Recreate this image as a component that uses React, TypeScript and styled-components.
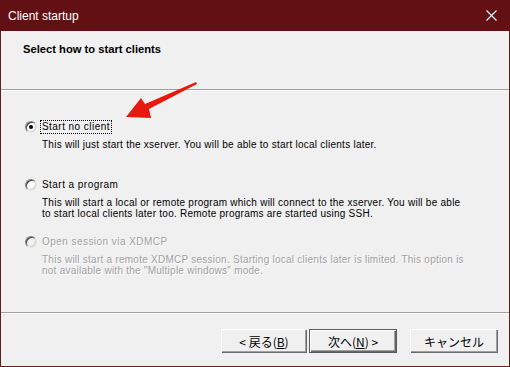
import styled, { createGlobalStyle } from 'styled-components';

const GlobalStyle = createGlobalStyle`
  html, body {
    margin: 0;
    padding: 0;
    background: #f0f0f0;
  }
  * { box-sizing: border-box; }
`;

const options = [
  {
    label: 'Start no client',
    lines: ['This will just start the xserver. You will be able to start local clients later.'],
    checked: true,
    disabled: false,
    focused: true,
  },
  {
    label: 'Start a program',
    lines: [
      'This will start a local or remote program which will connect to the xserver. You will be able',
      'to start local clients later too. Remote programs are started using SSH.',
    ],
    checked: false,
    disabled: false,
    focused: false,
  },
  {
    label: 'Open session via XDMCP',
    lines: [
      'This will start a remote XDMCP session. Starting local clients later is limited. This option is',
      'not available with the "Multiple windows" mode.',
    ],
    checked: false,
    disabled: true,
    focused: false,
  },
];

// ── Window chrome ─────────────────────────────────────────────────
const Window = styled.div`
  position: relative;
  width: 510px;
  height: 367px;
  display: flex;
  flex-direction: column;
  background: #f0f0f0;
  border: 1px solid #6b1a1a;
  border-top: none;
  font-family: "Liberation Sans", Arial, sans-serif;
`;

const TitleBar = styled.div`
  height: 31px;
  flex: none;
  display: flex;
  align-items: center;
  justify-content: space-between;
  padding: 0 13px 0 8px;
  margin: 0 -1px;
  background: #621013;
  color: #ffffff;
  font-size: 12px;
`;

const Header = styled.div`
  height: 58px;
  flex: none;
  padding: 12px 0 0 22px;
  font-size: 11.2px;
  font-weight: bold;
  color: #000;
`;

const Separator = styled.div`
  height: 2px;
  flex: none;
  border-top: 1px solid #a0a0a0;
  border-bottom: 1px solid #ffffff;
`;

const Content = styled.div`
  flex: 1;
  display: grid;
  grid-template-rows: 58px 57px auto;
  padding: 29px 0 0 24px;
`;

// ── Radio options ─────────────────────────────────────────────────
const Option = styled.div<{ $disabled: boolean }>`
  display: flex;
  flex-direction: column;
  color: ${p => (p.$disabled ? '#a0a0a0' : '#000')};
  text-shadow: ${p => (p.$disabled ? '1px 1px 0 #ffffff' : 'none')};
  font-size: 10px;
`;

const LabelRow = styled.div`
  display: flex;
  align-items: center;
  gap: 3px;
  height: 14px;
`;

const Radio = styled.span<{ $checked: boolean; $disabled: boolean }>`
  position: relative;
  width: 12px;
  height: 12px;
  border-radius: 50%;
  background: ${p => (p.$disabled ? '#f0f0f0' : '#ffffff')};
  border: 1px solid;
  border-color: #808080 #e3e3e3 #e3e3e3 #808080;
  box-shadow: inset 1px 1px 0 #404040, inset -1px -1px 0 #d4d0c8;

  &::after {
    content: '';
    display: ${p => (p.$checked ? 'block' : 'none')};
    position: absolute;
    left: 3px;
    top: 3px;
    width: 4px;
    height: 4px;
    border-radius: 50%;
    background: #000;
  }
`;

const Label = styled.span<{ $focused: boolean }>`
  padding: 0 1px;
  line-height: 12px;
  border: 1px ${p => (p.$focused ? 'dotted #000' : 'solid transparent')};
  letter-spacing: 0.45px;
`;

const Desc = styled.div`
  margin: 5px 0 0 17px;
  line-height: 11px;
  white-space: nowrap;
  letter-spacing: 0.25px;
`;

// ── Footer buttons ────────────────────────────────────────────────
const Footer = styled.div`
  height: 52px;
  flex: none;
  display: flex;
  justify-content: flex-end;
  padding: 15px 11px 0 0;
`;

const Button = styled.button<{ $default?: boolean; $gap?: number; $width?: number }>`
  width: ${p => p.$width ?? 88}px;
  height: 24px;
  margin-left: ${p => p.$gap ?? 0}px;
  padding: 0;
  background: #f0f0f0;
  font-family: "Noto Sans CJK JP", "Liberation Sans", sans-serif;
  font-size: 12px;
  color: #000;
  border: ${p => (p.$default ? '1px solid #5a5a5a' : 'none')};
  box-shadow: inset 1px 1px 0 #fff, inset -1px -1px 0 #696969, inset -2px -2px 0 #a0a0a0;
  display: flex;
  align-items: center;
  justify-content: center;
`;

const Key = styled.span`
  text-decoration: underline;
`;

const ArrowLayer = styled.svg`
  position: absolute;
  left: 118px;
  top: 78px;
  pointer-events: none;
`;

export default function App() {
  return (
    <>
      <GlobalStyle />
      <Window>
        <TitleBar>
          <span>Client startup</span>
          <svg width="11" height="11" viewBox="0 0 11 11">
            <path d="M0.5 0.5 L10.5 10.5 M10.5 0.5 L0.5 10.5" stroke="#fff" strokeWidth="1.1" />
          </svg>
        </TitleBar>

        <Header>Select how to start clients</Header>
        <Separator />

        <Content>
          {options.map(o => (
            <Option key={o.label} $disabled={o.disabled}>
              <LabelRow>
                <Radio $checked={o.checked} $disabled={o.disabled} />
                <Label $focused={o.focused}>{o.label}</Label>
              </LabelRow>
              <Desc>
                {o.lines.map((l, i) => (
                  <div key={i}>{l}</div>
                ))}
              </Desc>
            </Option>
          ))}
        </Content>

        <Separator />

        <Footer>
          <Button $width={86}>&lt; 戻る(<Key>B</Key>)</Button>
          <Button $default $gap={2}>次へ(<Key>N</Key>) &gt;</Button>
          <Button $gap={13}>キャンセル</Button>
        </Footer>

        <ArrowLayer width="82" height="44" viewBox="118 78 82 44">
          <polygon
            points="195,82 196,84 148,109 150,118 125,117 140,98 144,104"
            fill="#e8190f"
          />
        </ArrowLayer>
      </Window>
    </>
  );
}
